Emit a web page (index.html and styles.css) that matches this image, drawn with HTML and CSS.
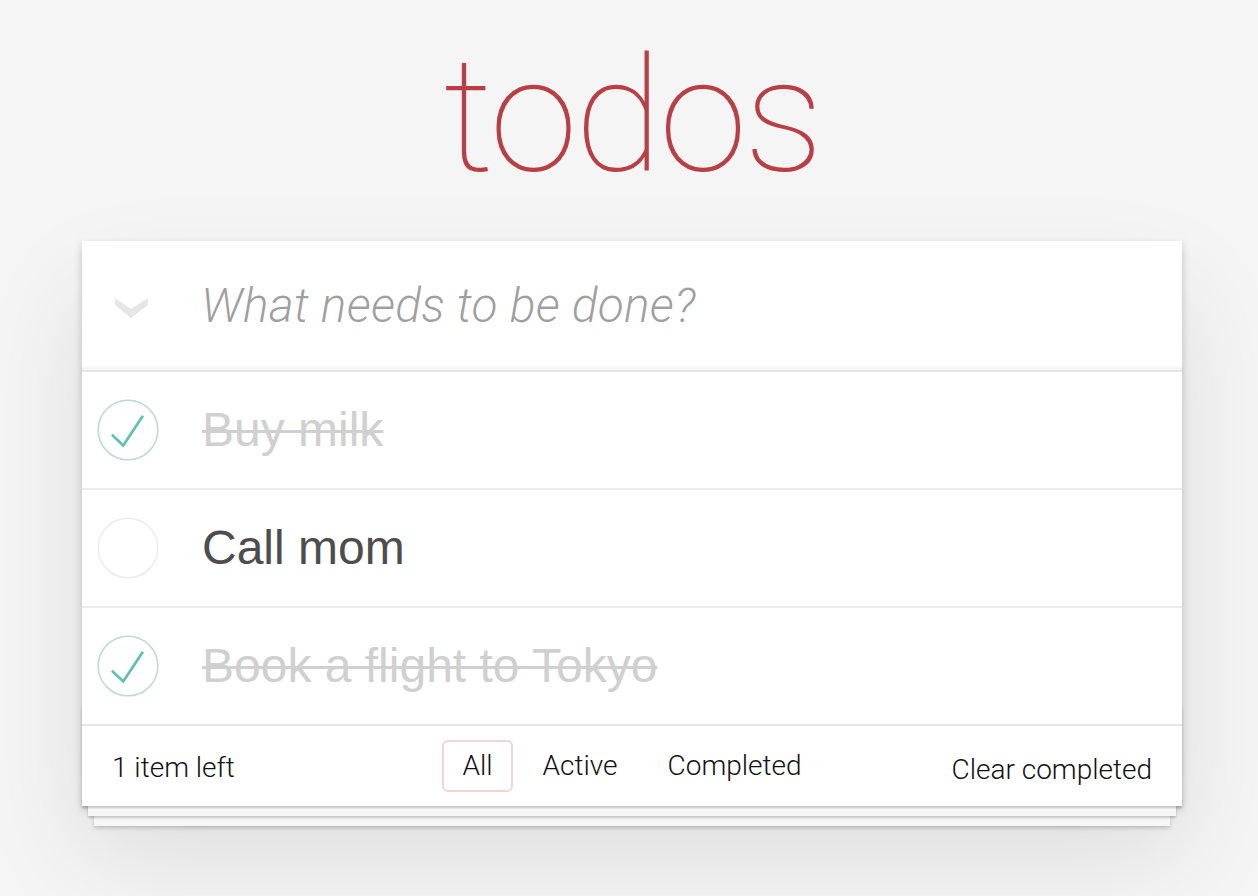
FILE: index.html
```html
<!DOCTYPE html>
<html lang="en">
<head>
<meta charset="utf-8">
<title>todos</title>
<link rel="stylesheet" href="styles.css">
</head>
<body>
<div class="page">
  <h1 class="title">todos</h1>
  <section class="todoapp">
    <header class="header">
      <label class="toggle-all" aria-label="Mark all as complete">
        <svg width="33" height="20" viewBox="0 0 33 20"><polygon points="0,0 16,11 33,0 33,7 16,20 0,7" fill="#e6e6e6"/></svg>
      </label>
      <input class="new-todo" placeholder="What needs to be done?">
    </header>
    <section class="main">
      <ul class="todo-list">
        <li class="todo completed">
          <span class="toggle">
            <svg width="62" height="62" viewBox="-2 -2 104 104"><circle cx="50" cy="50" r="50" fill="none" stroke="#bddad5" stroke-width="2.6"/><path d="M75 26L42 76 23 58" fill="none" stroke="#5dc2af" stroke-width="4.6"/></svg>
          </span>
          <label class="todo-label">Buy milk</label>
        </li>
        <li class="todo">
          <span class="toggle">
            <svg width="62" height="62" viewBox="-2 -2 104 104"><circle cx="50" cy="50" r="50" fill="none" stroke="#ededed" stroke-width="2.6"/></svg>
          </span>
          <label class="todo-label">Call mom</label>
        </li>
        <li class="todo completed">
          <span class="toggle">
            <svg width="62" height="62" viewBox="-2 -2 104 104"><circle cx="50" cy="50" r="50" fill="none" stroke="#bddad5" stroke-width="2.6"/><path d="M75 26L42 76 23 58" fill="none" stroke="#5dc2af" stroke-width="4.6"/></svg>
          </span>
          <label class="todo-label">Book a flight to Tokyo</label>
        </li>
      </ul>
    </section>
    <footer class="footer">
      <span class="todo-count">1 item left</span>
      <ul class="filters">
        <li><a class="filter selected" href="#/">All</a></li>
        <li><a class="filter" href="#/active">Active</a></li>
        <li><a class="filter" href="#/completed">Completed</a></li>
      </ul>
      <button class="clear-completed">Clear completed</button>
    </footer>
  </section>
</div>
</body>
</html>
```

FILE: styles.css
```css
html, body {
  margin: 0;
  padding: 0;
}

body {
  background: #f5f5f5;
  font-family: "Roboto", "Liberation Sans", sans-serif;
  font-weight: 300;
  color: #111;
  -webkit-font-smoothing: antialiased;
}

.page {
  padding: 36px 0 90px 6px;
}

.title {
  margin: 0 0 45px;
  text-align: center;
  font-family: "Roboto", sans-serif;
  font-weight: 100;
  font-size: 160px;
  line-height: 160px;
  letter-spacing: -3px;
  color: #b83f45;
}

.todoapp {
  width: 1100px;
  margin: 0 auto;
  background: #fff;
  position: relative;
  box-shadow: 0 4px 8px 0 rgba(0, 0, 0, 0.2), 0 50px 100px 0 rgba(0, 0, 0, 0.1);
}

.header {
  height: 129px;
  display: flex;
  align-items: center;
  box-shadow: inset 0 -4px 2px rgba(0, 0, 0, 0.03);
}

.toggle-all {
  width: 98px;
  flex: none;
  display: flex;
  justify-content: center;
  padding-top: 4px;
}

.new-todo {
  flex: 1;
  border: 0;
  outline: none;
  background: transparent;
  padding: 0 30px 0 21px;
  font-family: "Roboto", sans-serif;
  font-size: 48px;
  font-weight: 300;
  letter-spacing: 0.2px;
  color: #4d4d4d;
  height: 100%;
}

.new-todo::placeholder {
  font-style: italic;
  font-weight: 300;
  color: rgba(0, 0, 0, 0.38);
}

.main {
  border-top: 2px solid #e6e6e6;
}

.todo-list {
  list-style: none;
  margin: 0;
  padding: 0;
}

.todo {
  display: flex;
  align-items: center;
  border-bottom: 2px solid #ededed;
}

.todo:last-child {
  border-bottom: none;
}

.toggle {
  width: 62px;
  height: 62px;
  margin-left: 15px;
  flex: none;
  display: block;
}

.toggle svg {
  display: block;
}

.todo-label {
  padding: 30px 30px 30px 43px;
  font-family: "Liberation Sans", Arial, sans-serif;
  font-weight: 400;
  font-size: 48px;
  line-height: 56px;
  color: #4d4d4d;
}

.completed .todo-label {
  color: #d0d0d0;
  text-decoration: line-through;
  text-decoration-thickness: 3px;
}

.footer {
  position: relative;
  display: grid;
  grid-template-columns: 1fr auto 1fr;
  grid-template-rows: 80px;
  align-items: center;
  padding: 0 30px;
  height: 80px;
  border-top: 2px solid #e6e6e6;
  font-size: 28px;
  color: #111;
}

.footer::before {
  content: "";
  position: absolute;
  right: 0;
  bottom: 0;
  left: 0;
  height: 100px;
  overflow: hidden;
  pointer-events: none;
  box-shadow: 0 2px 2px rgba(0, 0, 0, 0.2),
    0 16px 0 -6px #f6f6f6,
    0 18px 2px -6px rgba(0, 0, 0, 0.2),
    0 32px 0 -12px #f6f6f6,
    0 34px 4px -12px rgba(0, 0, 0, 0.2);
}

.todo-count {
  justify-self: start;
  line-height: 40px;
  margin-top: 4px;
  position: relative;
}

.filters {
  list-style: none;
  margin: 0;
  padding: 0;
  display: flex;
  gap: 10px;
  position: relative;
}

.filter {
  display: block;
  padding: 6px 18px;
  line-height: 36px;
  border: 2px solid transparent;
  border-radius: 6px;
  color: inherit;
  text-decoration: none;
}

.filter.selected {
  border-color: rgba(175, 47, 47, 0.2);
}

.clear-completed {
  justify-self: end;
  border: 0;
  background: none;
  padding: 0;
  margin: 8px 0 0;
  font-family: inherit;
  font-size: 28px;
  font-weight: 300;
  line-height: 40px;
  color: inherit;
  position: relative;
}
```
